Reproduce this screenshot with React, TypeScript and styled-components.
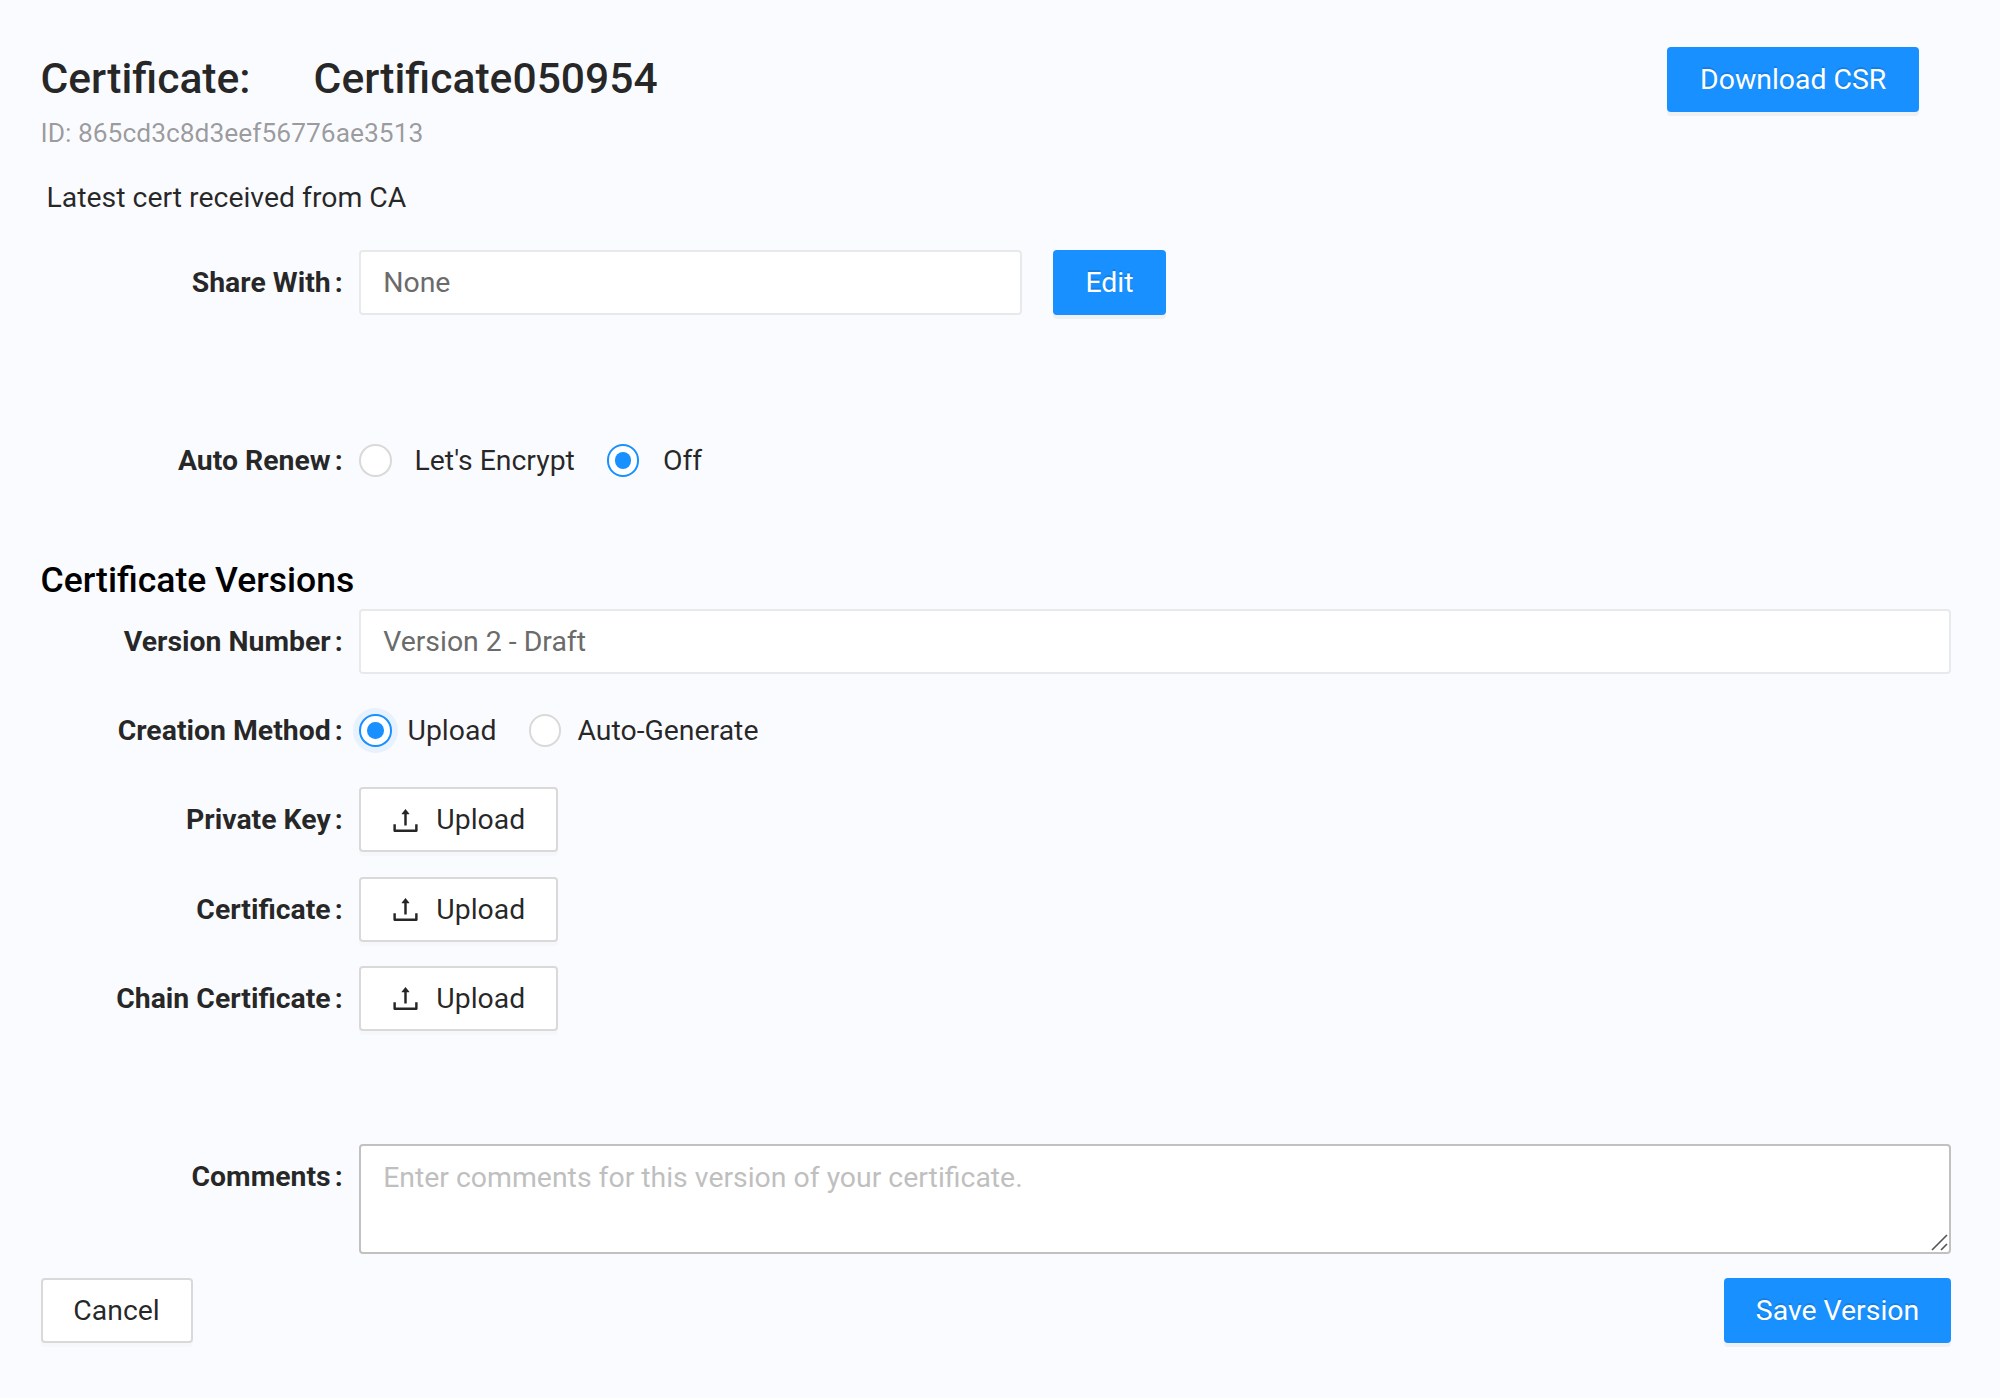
import React from "react";
import styled, { createGlobalStyle, css } from "styled-components";

const blue = "#1890ff";
const ink = "rgba(0, 0, 0, 0.85)";

const GlobalStyle = createGlobalStyle`
  *, *::before, *::after { box-sizing: border-box; }
  body {
    margin: 0;
    background: #fafbff;
    color: ${ink};
    font-family: Roboto, "Liberation Sans", sans-serif;
    font-size: 28.4px;
    line-height: 44px;
  }
`;

const Page = styled.main`
  display: flex;
  flex-direction: column;
  width: 2000px;
  height: 1398px;
  padding: 47px 49px 0 40.5px;
`;

const Header = styled.header`
  display: flex;
  justify-content: space-between;
  align-items: flex-start;
  height: 65px;
  padding-right: 32px;
`;

const Title = styled.h1`
  display: flex;
  gap: 63px;
  margin: 0;
  font-size: 42.6px;
  font-weight: 500;
  line-height: 63px;
`;

const Identifier = styled.div`
  height: 44px;
  color: rgba(0, 0, 0, 0.4);
  font-size: 26.4px;
  line-height: 43px;
`;

const Status = styled.p`
  height: 44px;
  margin: 20px 0 0;
  padding-left: 6px;
`;

const SectionTitle = styled.h2`
  height: 48px;
  margin: 63px 0 5px;
  color: #000;
  font-size: 35.5px;
  font-weight: 500;
  line-height: 49px;
`;

const Row = styled.div<{ $before?: number; $height?: number }>`
  display: grid;
  grid-template-columns: 318.5px 1fr;
  flex-shrink: 0;
  height: ${(p) => p.$height ?? 65}px;
  margin-top: ${(p) => p.$before ?? 0}px;
`;

const Label = styled.label`
  height: 65px;
  padding-right: 16.3px;
  font-weight: 700;
  line-height: 66px;
  text-align: right;
  white-space: nowrap;

  &::after {
    content: ":";
    margin-left: 4px;
  }
`;

const Controls = styled.div`
  display: flex;
  align-items: center;
  height: 65px;
  min-width: 0;
`;

const fieldStyle = css`
  border-radius: 4px;
  background: #fff;
  font: inherit;
  outline: none;
`;

const TextField = styled.input<{ $width: string }>`
  ${fieldStyle}
  width: ${(p) => p.$width};
  height: 65px;
  padding: 0 22.2px;
  border: 2px solid #e8e9ea;
  color: #6b6b6b;
`;

const CommentField = styled.textarea`
  ${fieldStyle}
  display: block;
  width: 100%;
  height: 110px;
  padding: 10px 22.2px;
  border: 2px solid #c1c1c1;
  color: ${ink};
  resize: none;

  &::placeholder { color: #bfbfbf; opacity: 1; }
`;

const CommentBox = styled.div`
  position: relative;
  width: 100%;
`;

const ResizeGrip = styled.svg`
  position: absolute;
  right: 3px;
  bottom: 2.5px;
  width: 17px;
  height: 17px;
`;

const Button = styled.button<{ $primary?: boolean; $width: number }>`
  display: inline-flex;
  align-items: center;
  justify-content: center;
  flex-shrink: 0;
  gap: 16px;
  width: ${(p) => p.$width}px;
  height: 65px;
  padding: 1px 0 0;
  border: 2px solid ${(p) => (p.$primary ? blue : "#d9d9d9")};
  border-radius: 4px;
  background: ${(p) => (p.$primary ? blue : "#fff")};
  box-shadow: 0 4px 0 ${(p) => (p.$primary ? "rgba(0, 0, 0, 0.045)" : "rgba(0, 0, 0, 0.015)")};
  color: ${(p) => (p.$primary ? "#fff" : ink)};
  font: inherit;
  text-shadow: ${(p) => (p.$primary ? "0 -2px 0 rgba(0, 0, 0, 0.12)" : "none")};
`;

const EditButton = styled(Button)`
  margin-left: 31px;
`;

const Option = styled.label<{ $gap: number; $after?: number }>`
  display: flex;
  align-items: center;
  gap: ${(p) => p.$gap}px;
  margin-right: ${(p) => p.$after ?? 0}px;
`;

const OptionText = styled.span`
  padding-top: 1.5px;
`;

const Radio = styled.span<{ $checked?: boolean; $focused?: boolean }>`
  display: grid;
  place-items: center;
  flex-shrink: 0;
  width: 32.5px;
  height: 32.5px;
  border: 2px solid ${(p) => (p.$checked ? blue : "#d9d9d9")};
  border-radius: 50%;
  background: #fff;
  box-shadow: ${(p) => (p.$focused ? "0 0 0 6px rgba(24, 144, 255, 0.08)" : "none")};

  &::after {
    content: "";
    width: 16.5px;
    height: 16.5px;
    border-radius: 50%;
    background: ${(p) => (p.$checked ? blue : "transparent")};
  }
`;

const Footer = styled.footer`
  display: flex;
  justify-content: space-between;
  margin-top: 24px;
`;

const UploadIcon = () => (
  <svg width="29" height="29" viewBox="64 64 896 896" fill="currentColor" aria-hidden="true">
    <path d="M400 317.7h73.9V656c0 4.4 3.6 8 8 8h60c4.4 0 8-3.6 8-8V317.7H624c6.7 0 10.4-7.7 6.3-12.9L518.3 163a8 8 0 0 0-12.6 0l-112 141.7c-4.1 5.3-.4 13 6.3 13zM878 626h-60c-4.4 0-8 3.6-8 8v154H214V634c0-4.4-3.6-8-8-8h-60c-4.4 0-8 3.6-8 8v198c0 17.7 14.3 32 32 32h684c17.7 0 32-14.3 32-32V634c0-4.4-3.6-8-8-8z" />
  </svg>
);

const uploads = ["Private Key", "Certificate", "Chain Certificate"];

export default function App() {
  return (
    <>
      <GlobalStyle />
      <Page>
        <Header>
          <Title>
            <span>Certificate:</span>
            <span>Certificate050954</span>
          </Title>
          <Button $primary $width={251.6}>Download CSR</Button>
        </Header>
        <Identifier>ID: 865cd3c8d3eef56776ae3513</Identifier>
        <Status>Latest cert received from CA</Status>

        <Row $before={29.6}>
          <Label>Share With</Label>
          <Controls>
            <TextField $width="663px" value="None" readOnly />
            <EditButton $primary $width={113}>Edit</EditButton>
          </Controls>
        </Row>
        <Row $before={113.4}>
          <Label>Auto Renew</Label>
          <Controls>
            <Option $gap={23} $after={32}>
              <Radio />
              <OptionText>Let's Encrypt</OptionText>
            </Option>
            <Option $gap={23.5}>
              <Radio $checked />
              <OptionText>Off</OptionText>
            </Option>
          </Controls>
        </Row>

        <SectionTitle>Certificate Versions</SectionTitle>
        <Row>
          <Label>Version Number</Label>
          <Controls>
            <TextField $width="100%" value="Version 2 - Draft" readOnly />
          </Controls>
        </Row>
        <Row $before={24.2}>
          <Label>Creation Method</Label>
          <Controls>
            <Option $gap={16} $after={32.5}>
              <Radio $checked $focused />
              <OptionText>Upload</OptionText>
            </Option>
            <Option $gap={16}>
              <Radio />
              <OptionText>Auto-Generate</OptionText>
            </Option>
          </Controls>
        </Row>
        {uploads.map((name) => (
          <Row key={name} $before={24.2}>
            <Label>{name}</Label>
            <Controls>
              <Button $width={198.5}>
                <UploadIcon />
                Upload
              </Button>
            </Controls>
          </Row>
        ))}
        <Row $before={113.2} $height={110}>
          <Label>Comments</Label>
          <CommentBox>
            <CommentField placeholder="Enter comments for this version of your certificate." />
            <ResizeGrip viewBox="0 0 17 17" stroke="#555" strokeWidth="1.6" fill="none" aria-hidden="true">
              <path d="M1 16L16 1M10 16L16 10" />
            </ResizeGrip>
          </CommentBox>
        </Row>

        <Footer>
          <Button $width={152}>Cancel</Button>
          <Button $primary $width={227}>Save Version</Button>
        </Footer>
      </Page>
    </>
  );
}
